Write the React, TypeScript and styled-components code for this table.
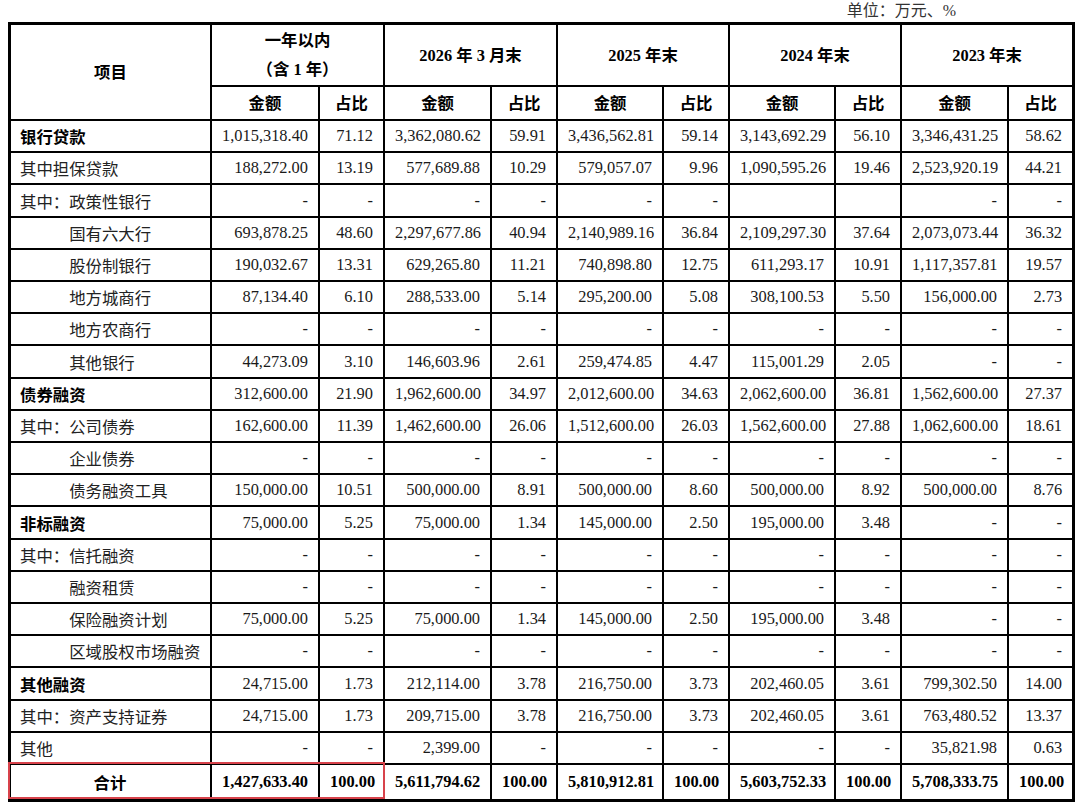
import React from "react";
import styled, { createGlobalStyle } from "styled-components";

const Global = createGlobalStyle`
  html, body { margin: 0; padding: 0; background: #fff; }
  body {
    font-family: "Liberation Serif", "Noto Sans CJK SC", serif;
    color: #111;
  }
`;

const FONT = `"Liberation Serif", "Noto Sans CJK SC", serif`;

const Page = styled.div`
  width: 1080px;
  padding-left: 8px;
  box-sizing: border-box;
`;

const UnitLine = styled.div`
  height: 22px;
  display: flex;
  justify-content: flex-end;
  align-items: center;
  padding-right: 124px;
  font-family: ${FONT};
  font-size: 16px;
  color: #333;
  line-height: 22px;
`;

const TableWrap = styled.div`
  position: relative;
  width: 1067px;
`;

const Table = styled.table`
  width: 1067px;
  table-layout: fixed;
  border-collapse: separate;
  border-spacing: 0;
  border: 3px solid #000;
  font-family: ${FONT};
  font-size: 16.4px;
  color: #111;

  td, th {
    border-right: 2px solid #000;
    border-bottom: 2px solid #000;
    box-sizing: border-box;
    padding: 0 10px;
    vertical-align: middle;
    white-space: nowrap;
    overflow: hidden;
  }
  tr > *:last-child { border-right: none; }
  tbody tr:last-child > * { border-bottom: none; }
`;

const Col = styled.col<{ $w: number }>`
  width: ${(p) => p.$w}px;
`;

const HeadRow = styled.tr<{ $h: number }>`
  height: ${(p) => p.$h}px;
`;

const HeadCell = styled.th`
  font-weight: 700;
  text-align: center;
  color: #000;
  line-height: 29px;
`;

const Row = styled.tr<{ $h: number }>`
  height: ${(p) => p.$h}px;
`;

const LabelCell = styled.td<{ $bold?: boolean; $indent?: boolean; $center?: boolean }>`
  && {
    padding-left: ${(p) => (p.$indent ? "calc(9px + 3em)" : "9px")};
  }
  text-align: ${(p) => (p.$center ? "center" : "left")};
  font-weight: ${(p) => (p.$bold ? 700 : 400)};
  color: ${(p) => (p.$bold ? "#000" : "#222")};
`;

const NumCell = styled.td<{ $bold?: boolean }>`
  text-align: right;
  font-weight: ${(p) => (p.$bold ? 700 : 400)};
  color: ${(p) => (p.$bold ? "#000" : "#1a1a1a")};
`;

const Highlight = styled.div`
  position: absolute;
  left: 0;
  top: 740px;
  width: 377px;
  height: 37px;
  border: 2px solid #d8434b;
  box-sizing: border-box;
  pointer-events: none;
`;

type RowData = {
  label: string;
  bold?: boolean;
  indent?: boolean;
  vals: string[];
};

const D = ["-", "-", "-", "-", "-", "-", "-", "-", "-", "-"];

const rows: RowData[] = [
  { label: "银行贷款", bold: true, vals: ["1,015,318.40", "71.12", "3,362,080.62", "59.91", "3,436,562.81", "59.14", "3,143,692.29", "56.10", "3,346,431.25", "58.62"] },
  { label: "其中担保贷款", vals: ["188,272.00", "13.19", "577,689.88", "10.29", "579,057.07", "9.96", "1,090,595.26", "19.46", "2,523,920.19", "44.21"] },
  { label: "其中：政策性银行", vals: ["-", "-", "-", "-", "-", "-", "", "", "-", "-"] },
  { label: "国有六大行", indent: true, vals: ["693,878.25", "48.60", "2,297,677.86", "40.94", "2,140,989.16", "36.84", "2,109,297.30", "37.64", "2,073,073.44", "36.32"] },
  { label: "股份制银行", indent: true, vals: ["190,032.67", "13.31", "629,265.80", "11.21", "740,898.80", "12.75", "611,293.17", "10.91", "1,117,357.81", "19.57"] },
  { label: "地方城商行", indent: true, vals: ["87,134.40", "6.10", "288,533.00", "5.14", "295,200.00", "5.08", "308,100.53", "5.50", "156,000.00", "2.73"] },
  { label: "地方农商行", indent: true, vals: D },
  { label: "其他银行", indent: true, vals: ["44,273.09", "3.10", "146,603.96", "2.61", "259,474.85", "4.47", "115,001.29", "2.05", "-", "-"] },
  { label: "债券融资", bold: true, vals: ["312,600.00", "21.90", "1,962,600.00", "34.97", "2,012,600.00", "34.63", "2,062,600.00", "36.81", "1,562,600.00", "27.37"] },
  { label: "其中：公司债券", vals: ["162,600.00", "11.39", "1,462,600.00", "26.06", "1,512,600.00", "26.03", "1,562,600.00", "27.88", "1,062,600.00", "18.61"] },
  { label: "企业债券", indent: true, vals: D },
  { label: "债务融资工具", indent: true, vals: ["150,000.00", "10.51", "500,000.00", "8.91", "500,000.00", "8.60", "500,000.00", "8.92", "500,000.00", "8.76"] },
  { label: "非标融资", bold: true, vals: ["75,000.00", "5.25", "75,000.00", "1.34", "145,000.00", "2.50", "195,000.00", "3.48", "-", "-"] },
  { label: "其中：信托融资", vals: D },
  { label: "融资租赁", indent: true, vals: D },
  { label: "保险融资计划", indent: true, vals: ["75,000.00", "5.25", "75,000.00", "1.34", "145,000.00", "2.50", "195,000.00", "3.48", "-", "-"] },
  { label: "区域股权市场融资", indent: true, vals: D },
  { label: "其他融资", bold: true, vals: ["24,715.00", "1.73", "212,114.00", "3.78", "216,750.00", "3.73", "202,460.05", "3.61", "799,302.50", "14.00"] },
  { label: "其中：资产支持证券", vals: ["24,715.00", "1.73", "209,715.00", "3.78", "216,750.00", "3.73", "202,460.05", "3.61", "763,480.52", "13.37"] },
  { label: "其他", vals: ["-", "-", "2,399.00", "-", "-", "-", "-", "-", "35,821.98", "0.63"] },
];

const total = ["1,427,633.40", "100.00", "5,611,794.62", "100.00", "5,810,912.81", "100.00", "5,603,752.33", "100.00", "5,708,333.75", "100.00"];

const colWidths = [201, 108, 65, 107, 66, 106, 66, 106, 66, 107, 63];

const periods = ["2026 年 3 月末", "2025 年末", "2024 年末", "2023 年末"];

const rowHeight = (i: number) => Math.round(32.2 * (i + 1)) - Math.round(32.2 * i);

export default function App() {
  return (
    <>
      <Global />
      <Page>
        <UnitLine>单位：万元、%</UnitLine>
        <TableWrap>
          <Table>
            <colgroup>
              {colWidths.map((w, i) => (
                <Col key={i} $w={w} />
              ))}
            </colgroup>
            <thead>
              <HeadRow $h={62}>
                <HeadCell rowSpan={2}>项目</HeadCell>
                <HeadCell colSpan={2}>
                  一年以内
                  <br />
                  （含 1 年）
                </HeadCell>
                {periods.map((p) => (
                  <HeadCell key={p} colSpan={2}>
                    {p}
                  </HeadCell>
                ))}
              </HeadRow>
              <HeadRow $h={34}>
                {[0, 1, 2, 3, 4].map((i) => (
                  <React.Fragment key={i}>
                    <HeadCell>金额</HeadCell>
                    <HeadCell>占比</HeadCell>
                  </React.Fragment>
                ))}
              </HeadRow>
            </thead>
            <tbody>
              {rows.map((r, i) => (
                <Row key={r.label} $h={rowHeight(i)}>
                  <LabelCell $bold={r.bold} $indent={r.indent}>
                    {r.label}
                  </LabelCell>
                  {r.vals.map((v, j) => (
                    <NumCell key={j}>{v}</NumCell>
                  ))}
                </Row>
              ))}
              <Row $h={34}>
                <LabelCell $bold $center>
                  合计
                </LabelCell>
                {total.map((v, j) => (
                  <NumCell key={j} $bold>
                    {v}
                  </NumCell>
                ))}
              </Row>
            </tbody>
          </Table>
          <Highlight />
        </TableWrap>
      </Page>
    </>
  );
}
